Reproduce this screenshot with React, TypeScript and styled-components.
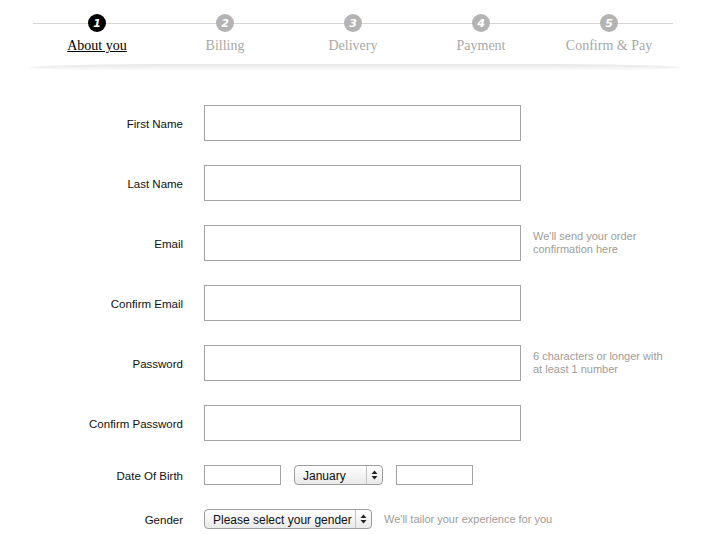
import React from "react";
import styled, { createGlobalStyle } from "styled-components";

const Global = createGlobalStyle`
  html, body { margin: 0; padding: 0; background: #fff; }
  body { font-family: "Liberation Sans", Arial, sans-serif; }
`;

const Page = styled.div`
  width: 708px;
  height: 534px;
  overflow: hidden;
  background: #fff;
`;

const Header = styled.div`
  margin-left: 33px;
  width: 640px;
  height: 64px;
  position: relative;
  background: #fff;

  &::after {
    content: "";
    position: absolute;
    left: -3px;
    right: -7px;
    top: 64px;
    height: 7px;
    border-radius: 50%/100%;
    background: linear-gradient(rgba(0, 0, 0, 0.1), rgba(0, 0, 0, 0));
  }
`;

const Line = styled.div`
  position: absolute;
  left: 0;
  right: 0;
  top: 23px;
  height: 1px;
  background: #d6d6d6;
`;

const Steps = styled.div`
  position: relative;
  display: grid;
  grid-template-columns: repeat(5, 128px);
  padding-top: 14px;
`;

const Step = styled.div`
  display: flex;
  flex-direction: column;
  align-items: center;
`;

const Circle = styled.div<{ $active?: boolean }>`
  width: 18px;
  height: 18px;
  border-radius: 50%;
  background: ${(p) => (p.$active ? "#000" : "#b3b3b3")};
  color: #fff;
  display: flex;
  align-items: center;
  justify-content: center;
  font-family: "DejaVu Sans", sans-serif;
  font-weight: bold;
  font-style: italic;
  font-size: 11px;
  line-height: 1;
`;

const StepLabel = styled.div<{ $active?: boolean }>`
  margin-top: 5px;
  font-family: "Liberation Serif", "Times New Roman", serif;
  font-size: 14px;
  line-height: 18px;
  color: ${(p) => (p.$active ? "#000" : "#a8a8a8")};
  text-decoration: ${(p) => (p.$active ? "underline" : "none")};
`;

const Form = styled.div`
  padding-top: 41px;
  display: flex;
  flex-direction: column;
  gap: 24px;
`;

const Row = styled.div`
  display: flex;
  align-items: center;
`;

const Label = styled.div`
  width: 183px;
  margin-right: 21px;
  padding-top: 2px;
  text-align: right;
  font-size: 11.5px;
  color: #111;
`;

const TextInput = styled.div<{ $w: number; $h: number }>`
  box-sizing: border-box;
  width: ${(p) => p.$w}px;
  height: ${(p) => p.$h}px;
  border: 1px solid #a4a4a4;
  background: #fff;
`;

const Hint = styled.div`
  margin-left: 12px;
  font-size: 11px;
  line-height: 13px;
  color: #a09c98;
`;

const Group = styled.div`
  display: flex;
  align-items: center;
  gap: 13px;
`;

const SelectBox = styled.div<{ $w: number }>`
  box-sizing: border-box;
  width: ${(p) => p.$w}px;
  height: 20px;
  border: 1px solid #9c9c9c;
  border-radius: 4px;
  background: linear-gradient(#ffffff, #e9e9e9);
  display: flex;
  align-items: center;
  font-size: 12px;
  color: #111;
`;

const SelectText = styled.span`
  flex: 1;
  padding-left: 8px;
  padding-top: 1px;
  white-space: nowrap;
`;

const Arrow = styled.span`
  width: 15px;
  height: 100%;
  border-left: 1px solid #c4c4c4;
  display: flex;
  align-items: center;
  justify-content: center;
`;

const Arrows = () => (
  <svg width="7" height="10" viewBox="0 0 7 10">
    <path d="M3.5 0.5 L6.5 4 L0.5 4 Z" fill="#222" />
    <path d="M3.5 9.5 L6.5 6 L0.5 6 Z" fill="#222" />
  </svg>
);

const Select = ({ w, text }: { w: number; text: string }) => (
  <SelectBox $w={w}>
    <SelectText>{text}</SelectText>
    <Arrow>
      <Arrows />
    </Arrow>
  </SelectBox>
);

const steps = ["About you", "Billing", "Delivery", "Payment", "Confirm & Pay"];

const fields: { label: string; hint?: string[] }[] = [
  { label: "First Name" },
  { label: "Last Name" },
  { label: "Email", hint: ["We'll send your order", "confirmation here"] },
  { label: "Confirm Email" },
  { label: "Password", hint: ["6 characters or longer with", "at least 1 number"] },
  { label: "Confirm Password" },
];

export default function App() {
  return (
    <Page>
      <Global />
      <Header>
        <Line />
        <Steps>
          {steps.map((s, i) => (
            <Step key={s}>
              <Circle $active={i === 0}>{i + 1}</Circle>
              <StepLabel $active={i === 0}>{s}</StepLabel>
            </Step>
          ))}
        </Steps>
      </Header>
      <Form>
        {fields.map((f) => (
          <Row key={f.label}>
            <Label>{f.label}</Label>
            <TextInput $w={317} $h={36} />
            {f.hint && (
              <Hint>
                {f.hint[0]}
                <br />
                {f.hint[1]}
              </Hint>
            )}
          </Row>
        ))}
        <Row>
          <Label>Date Of Birth</Label>
          <Group>
            <TextInput $w={77} $h={20} />
            <Select w={89} text="January" />
            <TextInput $w={77} $h={20} />
          </Group>
        </Row>
        <Row>
          <Label>Gender</Label>
          <Select w={168} text="Please select your gender" />
          <Hint>We'll tailor your experience for you</Hint>
        </Row>
      </Form>
    </Page>
  );
}
